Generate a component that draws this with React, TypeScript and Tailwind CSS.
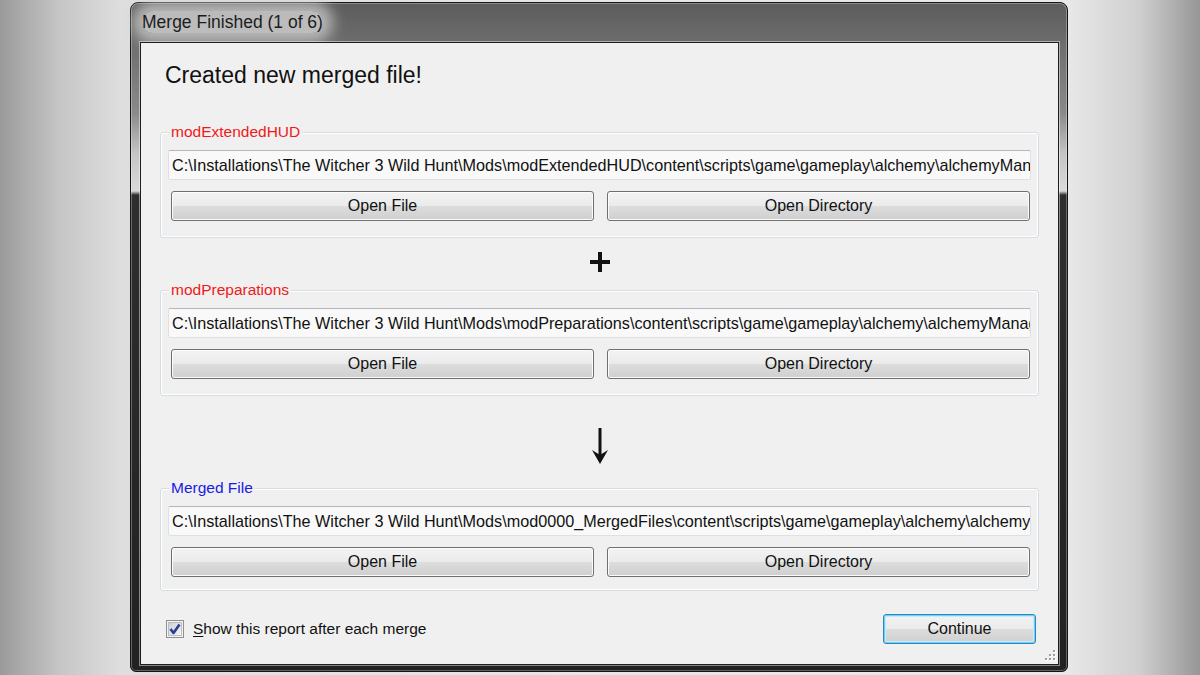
import React from 'react';

type Group = { label: string; color: string; path: string; bottom: string };

const groups: Group[] = [
  {
    label: 'modExtendedHUD',
    color: 'text-[#ee1a1a]',
    path: 'C:\\Installations\\The Witcher 3 Wild Hunt\\Mods\\modExtendedHUD\\content\\scripts\\game\\gameplay\\alchemy\\alchemyManager.ws',
    bottom: 'pb-[16px]',
  },
  {
    label: 'modPreparations',
    color: 'text-[#ee1a1a]',
    path: 'C:\\Installations\\The Witcher 3 Wild Hunt\\Mods\\modPreparations\\content\\scripts\\game\\gameplay\\alchemy\\alchemyManager.ws',
    bottom: 'pb-[16px]',
  },
  {
    label: 'Merged File',
    color: 'text-[#1a1ae6]',
    path: 'C:\\Installations\\The Witcher 3 Wild Hunt\\Mods\\mod0000_MergedFiles\\content\\scripts\\game\\gameplay\\alchemy\\alchemyManager.ws',
    bottom: 'pb-[13px]',
  },
];

function WinButton({ children, focused }: { children: React.ReactNode; focused?: boolean }) {
  return (
    <button
      type="button"
      className={
        'flex h-[30px] w-full items-center justify-center rounded-[3px] border bg-[linear-gradient(to_bottom,#f3f3f3_0%,#ebebeb_49%,#dddddd_50%,#cfcfcf_100%)] text-[16px] leading-none text-[#111] ' +
        (focused
          ? 'border-[#2f86bd] shadow-[inset_0_0_0_1px_#6fd0f5,inset_0_0_0_2px_#c4ecfa]'
          : 'border-[#707070] shadow-[inset_0_0_0_1px_#fbfbfb]')
      }
    >
      {children}
    </button>
  );
}

function GroupBox({ g }: { g: Group }) {
  return (
    <fieldset className={'mx-[19px] min-w-0 rounded-[3px] border border-[#d3dde3] px-[7px] shadow-[inset_0_0_0_1px_#ffffff] ' + g.bottom}>
      <legend className={'ml-[1px] bg-[#f0f0f0] px-[2px] text-[15.5px] leading-[20px] ' + g.color}>{g.label}</legend>
      <div className="flex min-w-0 flex-col pt-[8px]">
        <div className="flex h-[30px] min-w-0 items-center overflow-hidden whitespace-nowrap rounded-[2px] border border-[#dde1e6] border-t-[#b3b6bc] bg-[#f9f9f9] pl-[3px] text-[16.2px] text-[#111]">
          {g.path}
        </div>
        <div className="mt-[11px] grid grid-cols-2 gap-[13px] pl-[3px] pr-[1px]">
          <WinButton>Open File</WinButton>
          <WinButton>Open Directory</WinButton>
        </div>
      </div>
    </fieldset>
  );
}

export default function App() {
  return (
    <div className="h-[675px] w-[1200px] overflow-hidden bg-[linear-gradient(to_right,#9a9a9a_0%,#c6c6c6_5%,#dedede_10%,#e6e6e6_50%,#e8e8e8_89%,#cfcfcf_95%,#969696_100%)] pl-[130px] pt-[2px] font-['Liberation_Sans',Arial,sans-serif]">
      <div className="flex h-[670px] w-[938px] flex-col rounded-b-[6px] rounded-t-[8px] border border-[#141414] bg-[linear-gradient(to_bottom,#5c5c5c_0px,#6d6d6d_40px,#8a8a8a_110px,#c4c4c4_150px,#dadada_188px,#2e2e2e_192px,#222222_100%)] pb-[6px] pl-[9px] pr-[8px] shadow-[inset_0_0_0_1px_rgba(255,255,255,0.3)]">
        {/* title bar */}
        <div className="flex h-[39px] items-center pb-[1px] pl-[2px]">
          <span className="rounded-[18px] bg-[rgba(210,210,210,0.8)] text-[17.5px] leading-[22px] text-[#1c1c1c] shadow-[0_0_14px_10px_rgba(210,210,210,0.75)]">
            Merge Finished (1 of 6)
          </span>
        </div>

        {/* client area */}
        <div className="relative flex min-w-0 flex-1 flex-col border border-[#1e1e1e] bg-[#f0f0f0] shadow-[0_0_0_1px_rgba(255,255,255,0.45)]">
          <div className="pl-[24px] pt-[18px] text-[23px] leading-[28px] text-[#111]">Created new merged file!</div>
          <div className="h-[33px]" />

          <GroupBox g={groups[0]} />
          <div className="flex h-[42px] justify-center pt-[14px]">
            <svg width="20" height="20" viewBox="0 0 20 20">
              <rect x="8" y="0" width="4" height="20" fill="#111" />
              <rect x="0" y="8" width="20" height="4" fill="#111" />
            </svg>
          </div>

          <GroupBox g={groups[1]} />
          <div className="flex h-[82px] justify-center pt-[32px]">
            <svg width="16" height="36" viewBox="0 0 16 36">
              <rect x="6.5" y="0" width="3" height="28" fill="#111" />
              <polygon points="0,22 8,36 16,22 8,27" fill="#111" />
            </svg>
          </div>

          <GroupBox g={groups[2]} />

          <div className="mt-[23px] flex h-[30px] items-center justify-between pl-[25px] pr-[22px]">
            <div className="flex items-center gap-[9px]">
              <svg width="18" height="18" viewBox="0 0 18 18">
                <defs>
                  <linearGradient id="cb" x1="0" y1="0" x2="1" y2="1">
                    <stop offset="0" stopColor="#cbcfd5" />
                    <stop offset="1" stopColor="#f6f6f6" />
                  </linearGradient>
                </defs>
                <rect x="0.5" y="0.5" width="17" height="17" fill="#f4f4f4" stroke="#8e8f8f" />
                <rect x="2.5" y="2.5" width="13" height="13" fill="url(#cb)" stroke="#b9bec6" />
                <path d="M4.5 9 L7.5 13 L13.5 4.5" fill="none" stroke="#2c3f8f" strokeWidth="2.6" strokeLinejoin="round" />
              </svg>
              <span className="text-[15.5px] text-[#111]">
                <span className="underline underline-offset-2">S</span>how this report after each merge
              </span>
            </div>
            <div className="w-[153px]">
              <WinButton focused>Continue</WinButton>
            </div>
          </div>

          {/* size grip */}
          <svg className="absolute bottom-[3px] right-[2px]" width="12" height="12" viewBox="0 0 12 12">
            {[
              [9, 1],
              [9, 5],
              [5, 5],
              [9, 9],
              [5, 9],
              [1, 9],
            ].map(([x, y]) => (
              <g key={`${x}-${y}`}>
                <rect x={x + 1} y={y + 1} width="2" height="2" fill="#ffffff" />
                <rect x={x} y={y} width="2" height="2" fill="#a0a0a0" />
              </g>
            ))}
          </svg>
        </div>
      </div>
    </div>
  );
}
